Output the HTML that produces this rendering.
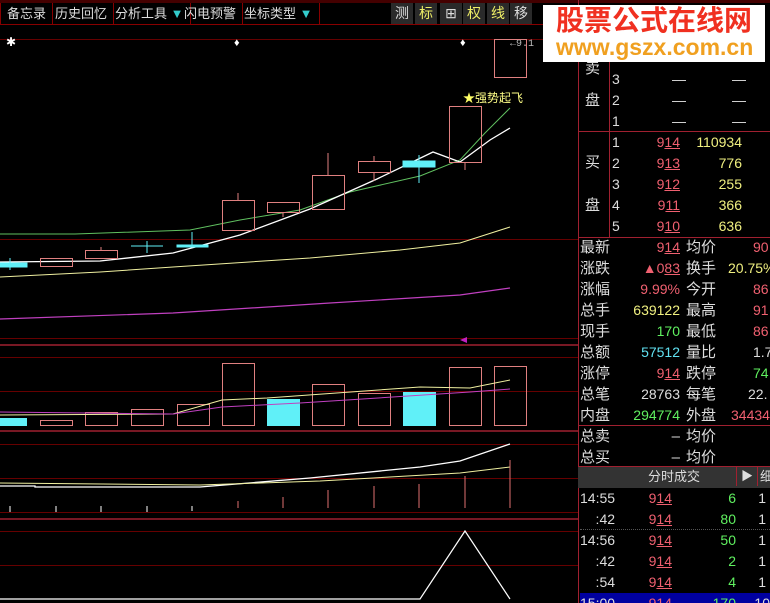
<!DOCTYPE html><html style="overflow:hidden;height:603px"><head><meta charset="utf-8"><style>
body{margin:0;background:#000;width:770px;height:603px;overflow:hidden;position:relative;font-family:"Liberation Sans","Noto Sans CJK SC",sans-serif;}
.t{position:absolute;white-space:nowrap;font-size:15px;line-height:21px;}
.tb{position:absolute;top:3px;height:21px;line-height:21px;font-size:13px;color:#ddd;border-right:1px solid #800;padding:0 6px;}
.bt{position:absolute;top:3px;height:21px;width:22px;background:#2a2a2a;color:#ddd;font-size:14px;text-align:center;line-height:21px;}
.r{color:#f06070}.y{color:#f0f080}.g{color:#60f060}.c{color:#60e0f0}.w{color:#ddd}
.u{text-decoration:underline;text-decoration-color:#f06070}
</style></head><body>
<div style="position:absolute;left:0;top:0;width:770px;height:3px;background:#400"></div>
<div style="position:absolute;left:0;top:24px;width:578px;height:1px;background:#800"></div>
<div class="tb" style="left:0;border-left:1px solid #800">备忘录</div>
<div class="tb" style="left:49px">历史回忆</div>
<div class="tb" style="left:109px">分析工具 <span style="color:#3cc">▼</span></div>
<div class="tb" style="left:178px">闪电预警</div>
<div class="tb" style="left:238px">坐标类型 <span style="color:#3cc">▼</span></div>
<div class="bt" style="left:391px">测</div><div class="bt y" style="left:415px;color:#ee6">标</div><div class="bt" style="left:440px">⊞</div><div class="bt" style="left:463px;color:#ee6">权</div><div class="bt" style="left:487px;color:#ee6">线</div><div class="bt" style="left:510px">移</div>
<svg width="578" height="603" style="position:absolute;left:0;top:0" xmlns="http://www.w3.org/2000/svg">
<g stroke="#600" stroke-width="1">
<line x1="0" y1="39.5" x2="578" y2="39.5"/><line x1="0" y1="239.5" x2="578" y2="239.5"/><line x1="0" y1="338.5" x2="578" y2="338.5"/>
<line x1="0" y1="357.5" x2="578" y2="357.5"/><line x1="0" y1="391.5" x2="578" y2="391.5"/>
<line x1="0" y1="444.5" x2="578" y2="444.5"/><line x1="0" y1="478.5" x2="578" y2="478.5"/><line x1="0" y1="512.5" x2="578" y2="512.5"/>
<line x1="0" y1="531.5" x2="578" y2="531.5"/><line x1="0" y1="565.5" x2="578" y2="565.5"/>
</g>
<g stroke="#a02030" stroke-width="1.5"><line x1="0" y1="345" x2="578" y2="345"/><line x1="0" y1="431" x2="578" y2="431"/><line x1="0" y1="519" x2="578" y2="519"/></g>
<text x="6" y="46" fill="#fff" font-size="12">✱</text><text x="234" y="46" fill="#fff" font-size="11">♦</text><text x="460" y="46" fill="#fff" font-size="11">♦</text>
<text x="510" y="46" fill="#bbb" font-size="10" font-family="Liberation Mono">←9.1</text>
<polyline fill="none" stroke="#60c060" stroke-width="1" points="0,234 75,234 190,230 240,220 300,210 350,192 420,176 460,160 485,133 510,108"/>
<polyline fill="none" stroke="#fff" stroke-width="1.3" points="0,262 100,261 173,253 240,235 310,209 377,179 433,152 460,162 490,140 510,128"/>
<polyline fill="none" stroke="#f0f0a0" stroke-width="1" points="0,277 100,272 173,267 310,258 400,250 460,243 510,227"/>
<polyline fill="none" stroke="#c040c0" stroke-width="1.2" points="0,319 173,313 330,303 460,295 510,288"/>
<g fill="none" stroke="#e08080" stroke-width="1">
<rect x="40.5" y="258.5" width="32" height="8"/><rect x="85.5" y="250.5" width="32" height="8"/><line x1="101" y1="247" x2="101" y2="250"/>
<rect x="222.5" y="200.5" width="32" height="30"/><line x1="238" y1="193" x2="238" y2="200"/>
<rect x="267.5" y="202.5" width="32" height="10"/><line x1="283" y1="212" x2="283" y2="217"/>
<rect x="312.5" y="175.5" width="32" height="34"/><line x1="328" y1="153" x2="328" y2="175"/>
<rect x="358.5" y="161.5" width="32" height="11"/><line x1="374" y1="156" x2="374" y2="161"/><line x1="374" y1="172" x2="374" y2="181"/>
<rect x="449.5" y="106.5" width="32" height="56"/><line x1="465" y1="162" x2="465" y2="170"/>
<rect x="494.5" y="39.5" width="32" height="38"/>
</g>
<g fill="#60f0f8" stroke="#60f0f8">
<rect x="0" y="263" width="27" height="4"/><line x1="10" y1="258" x2="10" y2="270"/>
<line x1="131" y1="246" x2="163" y2="246"/><line x1="147" y1="241" x2="147" y2="253"/>
<rect x="177" y="245" width="31" height="2"/><line x1="192" y1="232" x2="192" y2="246"/>
<rect x="403" y="161" width="32" height="6"/><line x1="419" y1="155" x2="419" y2="183"/>
</g>
<text x="463" y="102" fill="#ff6" font-size="12">★</text><text x="475" y="102" fill="#ff8" font-size="12">强势起飞</text>
<polygon points="460,340 467,337 467,343" fill="#c020c0"/>
<g fill="none" stroke="#e08080">
<rect x="40.5" y="420.5" width="32" height="5"/><rect x="85.5" y="412.5" width="32" height="13"/><rect x="131.5" y="409.5" width="32" height="16"/>
<rect x="177.5" y="404.5" width="32" height="21"/><rect x="222.5" y="363.5" width="32" height="62"/><rect x="312.5" y="384.5" width="32" height="41"/>
<rect x="358.5" y="393.5" width="32" height="32"/><rect x="449.5" y="367.5" width="32" height="58"/><rect x="494.5" y="366.5" width="32" height="59"/>
</g>
<g fill="#60f0f8"><rect x="0" y="418" width="27" height="8"/><rect x="267" y="399" width="33" height="27"/><rect x="403" y="392" width="33" height="34"/></g>
<polyline fill="none" stroke="#f0f0a0" points="0,415 173,414 222,400 267,398 420,387 470,388 510,380"/>
<polyline fill="none" stroke="#c040c0" points="0,412 173,414 222,407 300,403 470,392 510,389"/>
<polyline fill="none" stroke="#fff" stroke-width="1.3" points="0,486 35,486 35,487 200,487 310,478 420,467 460,461 510,444"/>
<polyline fill="none" stroke="#f0f0a0" stroke-width="1" points="0,483 200,485 320,481 460,473 510,467"/>
<g stroke="#fff"><line x1="10" y1="506" x2="10" y2="512"/><line x1="56" y1="506" x2="56" y2="512"/><line x1="101" y1="506" x2="101" y2="512"/><line x1="147" y1="506" x2="147" y2="512"/><line x1="192" y1="506" x2="192" y2="511"/></g>
<g stroke="#e07070"><line x1="238" y1="501" x2="238" y2="508"/><line x1="283" y1="497" x2="283" y2="508"/><line x1="328" y1="490" x2="328" y2="508"/><line x1="374" y1="486" x2="374" y2="508"/><line x1="419" y1="484" x2="419" y2="508"/><line x1="465" y1="476" x2="465" y2="508"/><line x1="510" y1="460" x2="510" y2="508"/></g>
<polyline fill="none" stroke="#fff" stroke-width="1.2" points="0,599 420,599 465,531 510,599"/>
</svg>
<div style="position:absolute;left:578px;top:0;width:1px;height:603px;background:#a02030"></div>
<div style="position:absolute;left:609px;top:40px;width:1px;height:197px;background:#a02030"></div>
<div style="position:absolute;left:578px;top:131px;width:192px;height:1px;background:#a02030"></div>
<div style="position:absolute;left:578px;top:237px;width:192px;height:1px;background:#a02030"></div>
<div style="position:absolute;left:578px;top:425px;width:192px;height:1px;background:#a02030"></div>
<div style="position:absolute;left:578px;top:466px;width:192px;height:21px;background:#333;border-top:1px solid #a02030"></div>
<div class="t w" style="left:648px;top:466px;font-size:13px">分时成交</div>
<div class="t w" style="left:736px;top:466px;width:20px;height:20px;border-left:1px solid #a02030;border-right:1px solid #a02030;text-align:center;font-size:12px">▶</div>
<div class="t w" style="left:760px;top:466px;font-size:13px">细</div>
<div class="t w" style="left:585px;top:58px">卖</div><div class="t w" style="left:585px;top:90px">盘</div>
<div class="t w" style="left:585px;top:152px">买</div><div class="t w" style="left:585px;top:195px">盘</div>
<div style="position:absolute;left:612px;top:69px;width:150px;font-size:14px;line-height:21px;color:#ddd">
<div>3<span style="position:absolute;left:60px">—</span><span style="position:absolute;left:120px">—</span></div>
<div>2<span style="position:absolute;left:60px">—</span><span style="position:absolute;left:120px">—</span></div>
<div>1<span style="position:absolute;left:60px">—</span><span style="position:absolute;left:120px">—</span></div></div>
<div style="position:absolute;left:612px;top:132px;width:130px;font-size:14px;line-height:21px;color:#ddd">
<div style="position:relative">1<span class="r" style="position:absolute;right:62px">9<span class="u">14</span></span><span class="y" style="position:absolute;right:0">110934</span></div>
<div style="position:relative">2<span class="r" style="position:absolute;right:62px">9<span class="u">13</span></span><span class="y" style="position:absolute;right:0">776</span></div>
<div style="position:relative">3<span class="r" style="position:absolute;right:62px">9<span class="u">12</span></span><span class="y" style="position:absolute;right:0">255</span></div>
<div style="position:relative">4<span class="r" style="position:absolute;right:62px">9<span class="u">11</span></span><span class="y" style="position:absolute;right:0">366</span></div>
<div style="position:relative">5<span class="r" style="position:absolute;right:62px">9<span class="u">10</span></span><span class="y" style="position:absolute;right:0">636</span></div></div>
<div style="position:absolute;left:580px;top:237px;width:200px;font-size:15px;line-height:21px;color:#ddd">
<div style="position:relative">最新<span class="r" style="position:absolute;right:100px;font-size:14px">9<span class="u">14</span></span><span style="position:absolute;left:106px">均价</span><span class="r" style="position:absolute;left:173px;font-size:14px">90</span></div>
<div style="position:relative">涨跌<span class="r" style="position:absolute;right:100px;font-size:14px">▲0<span class="u">83</span></span><span style="position:absolute;left:106px">换手</span><span class="y" style="position:absolute;left:148px;font-size:14px">20.75%</span></div>
<div style="position:relative">涨幅<span class="r" style="position:absolute;right:100px;font-size:14px">9.99%</span><span style="position:absolute;left:106px">今开</span><span class="r" style="position:absolute;left:173px;font-size:14px">86</span></div>
<div style="position:relative">总手<span class="y" style="position:absolute;right:100px;font-size:14px">639122</span><span style="position:absolute;left:106px">最高</span><span class="r" style="position:absolute;left:173px;font-size:14px">91</span></div>
<div style="position:relative">现手<span class="g" style="position:absolute;right:100px;font-size:14px">170</span><span style="position:absolute;left:106px">最低</span><span class="r" style="position:absolute;left:173px;font-size:14px">86</span></div>
<div style="position:relative">总额<span class="c" style="position:absolute;right:100px;font-size:14px">57512</span><span style="position:absolute;left:106px">量比</span><span style="position:absolute;left:173px;font-size:14px">1.7</span></div>
<div style="position:relative">涨停<span class="r" style="position:absolute;right:100px;font-size:14px">9<span class="u">14</span></span><span style="position:absolute;left:106px">跌停</span><span class="g" style="position:absolute;left:173px;font-size:14px">74</span></div>
<div style="position:relative">总笔<span style="position:absolute;right:100px;font-size:14px">28763</span><span style="position:absolute;left:106px">每笔</span><span style="position:absolute;left:168px;font-size:14px">22.</span></div>
<div style="position:relative">内盘<span class="g" style="position:absolute;right:100px;font-size:14px">294774</span><span style="position:absolute;left:106px">外盘</span><span class="r" style="position:absolute;left:151px;font-size:14px">34434</span></div>
<div style="position:relative">总卖<span style="position:absolute;right:100px">–</span><span style="position:absolute;left:106px">均价</span></div>
<div style="position:relative">总买<span style="position:absolute;right:100px">–</span><span style="position:absolute;left:106px">均价</span></div></div>
<div style="position:absolute;left:580px;top:488px;width:190px;height:115px;overflow:hidden;font-size:14px;line-height:21px;color:#ddd">
<div style="position:relative">14:55<span class="r" style="position:absolute;right:98px">9<span class="u">14</span></span><span class="g" style="position:absolute;right:34px">6</span><span style="position:absolute;right:4px">1</span></div>
<div style="position:relative;border-bottom:1px dotted #555;height:20px">&nbsp;&nbsp;&nbsp;&nbsp;:42<span class="r" style="position:absolute;right:98px">9<span class="u">14</span></span><span class="g" style="position:absolute;right:34px">80</span><span style="position:absolute;right:4px">1</span></div>
<div style="position:relative">14:56<span class="r" style="position:absolute;right:98px">9<span class="u">14</span></span><span class="g" style="position:absolute;right:34px">50</span><span style="position:absolute;right:4px">1</span></div>
<div style="position:relative">&nbsp;&nbsp;&nbsp;&nbsp;:42<span class="r" style="position:absolute;right:98px">9<span class="u">14</span></span><span class="g" style="position:absolute;right:34px">2</span><span style="position:absolute;right:4px">1</span></div>
<div style="position:relative">&nbsp;&nbsp;&nbsp;&nbsp;:54<span class="r" style="position:absolute;right:98px">9<span class="u">14</span></span><span class="g" style="position:absolute;right:34px">4</span><span style="position:absolute;right:4px">1</span></div>
<div style="position:relative;background:#0000a0;margin-left:-2px;padding-left:2px">15:00<span class="r" style="position:absolute;right:98px">914</span><span class="g" style="position:absolute;right:34px">170</span><span style="position:absolute;right:0">10</span></div></div>
<div style="position:absolute;left:543px;top:5px;width:222px;height:57px;background:#fff"></div>
<div class="t" style="left:556px;top:6px;font-size:28px;line-height:30px;font-weight:bold;color:#f03020">股票公式在线网</div>
<div class="t" style="left:556px;top:35px;font-size:23px;line-height:25px;font-weight:bold;color:#f0a020">www.gszx.com.cn</div>
</body></html>
